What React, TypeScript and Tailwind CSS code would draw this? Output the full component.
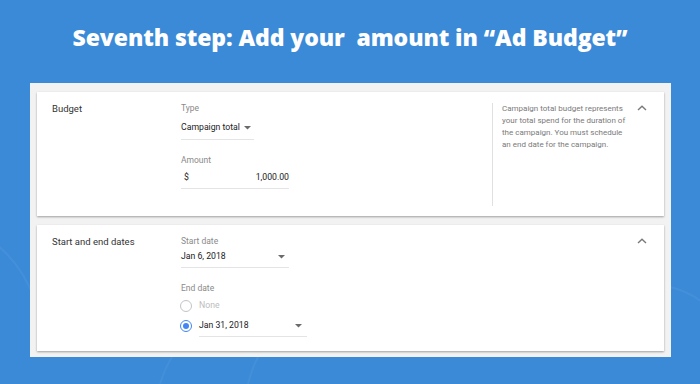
import React from "react";

const Caret = () => (
  <svg width="7" height="4" viewBox="0 0 7 4" className="shrink-0">
    <path d="M0 0 L7 0 L3.5 3.5 Z" fill="#6b6b6b" />
  </svg>
);

const ChevronUp = () => (
  <svg width="10" height="6" viewBox="0 0 10 6">
    <path d="M1 5 L5 1.2 L9 5" fill="none" stroke="#7a7a7a" strokeWidth="1.4" />
  </svg>
);

export default function App() {
  return (
    <div
      className="relative w-[700px] h-[384px] overflow-hidden bg-[#3b8ad8]"
      style={{ fontFamily: "Roboto, 'Liberation Sans', sans-serif" }}
    >
      <svg className="absolute inset-0" width="700" height="384" viewBox="0 0 700 384">
        <path d="M-10 240 Q 20 260 35 300" fill="none" stroke="rgba(255,255,255,0.05)" strokeWidth="2" />
        <path d="M660 285 Q 690 290 705 305" fill="none" stroke="rgba(255,255,255,0.05)" strokeWidth="2" />
        <path d="M160 384 Q 165 368 172 357" fill="none" stroke="rgba(255,255,255,0.045)" strokeWidth="2" />
        <path d="M248 384 Q 252 368 258 357" fill="none" stroke="rgba(255,255,255,0.045)" strokeWidth="2" />
      </svg>

      <div className="relative h-[83px] flex items-start justify-center pt-[21px]">
        <h1
          className="text-white font-extrabold text-[23px] leading-[32px] whitespace-pre tracking-[-0.1px]"
          style={{ fontFamily: "'Open Sans', 'Liberation Sans', sans-serif" }}
        >
          {"Seventh step: Add your  amount in \u201CAd Budget\u201D"}
        </h1>
      </div>

      <div className="relative ml-[30px] w-[641px] bg-[#f2f2f2] px-[7px] pt-[9px] pb-[6px] flex flex-col gap-[9px]">
        {/* Budget card */}
        <div className="h-[124px] bg-white shadow-[0_1px_2px_rgba(0,0,0,0.35)] flex pt-[9px] pl-[15px]">
          <div className="w-[129px] text-[9.5px] leading-[16px] text-[#333]">Budget</div>
          <div className="w-[311px] flex flex-col">
            <div className="h-[14px] leading-[14px] text-[8.5px] text-[#8a8a8a]">Type</div>
            <div className="mt-[2px] w-[73px] h-[23px] border-b border-[#e4e4e4] flex items-center gap-[4px] text-[8.7px] text-[#222]">
              <span>Campaign total</span>
              <Caret />
            </div>
            <div className="mt-[13px] h-[14px] leading-[14px] text-[8.5px] text-[#8a8a8a]">Amount</div>
            <div className="w-[108px] h-[22px] border-b border-[#e4e4e4] flex items-center justify-between pl-[3px] text-[8.7px] text-[#222]">
              <span>$</span>
              <span>1,000.00</span>
            </div>
          </div>
          <div className="mt-[2px] h-[103px] border-l border-[#e0e0e0]" />
          <div className="mt-[2px] ml-[9px] w-[126px] text-[8px] leading-[12px] text-[#7a7a7a]">
            Campaign total budget represents your total spend for the duration of the campaign. You must schedule an end date for the campaign.
          </div>
          <div className="ml-auto mr-[17px] mt-[4px]">
            <ChevronUp />
          </div>
        </div>

        {/* Dates card */}
        <div className="h-[126px] bg-white shadow-[0_1px_2px_rgba(0,0,0,0.35)] flex pt-[9px] pl-[15px]">
          <div className="w-[129px] text-[9.5px] leading-[16px] text-[#333]">Start and end dates</div>
          <div className="w-[311px] flex flex-col">
            <div className="mt-[1px] h-[12px] leading-[12px] text-[8.5px] text-[#8a8a8a]">Start date</div>
            <div className="w-[108px] h-[21px] border-b border-[#e4e4e4] flex items-center justify-between pr-[4px] text-[8.7px] text-[#222]">
              <span>Jan 6, 2018</span>
              <Caret />
            </div>
            <div className="mt-[13px] h-[14px] leading-[14px] text-[8.5px] text-[#8a8a8a]">End date</div>
            <div className="mt-[1px] h-[20px] flex items-center -ml-[1px]">
              <div className="w-[12px] h-[12px] rounded-full border-[1.5px] border-[#c4c4c4]" />
              <span className="ml-[7px] text-[8.7px] text-[#bdbdbd]">None</span>
            </div>
            <div className="h-[20px] flex items-center -ml-[1px]">
              <div className="w-[12px] h-[12px] rounded-full border-[1.5px] border-[#4285f4] flex items-center justify-center">
                <div className="w-[6px] h-[6px] rounded-full bg-[#4285f4]" />
              </div>
              <div className="ml-[7px] w-[108px] h-[21px] mt-[1px] border-b border-[#e4e4e4] flex items-center justify-between pr-[5px] text-[8.7px] text-[#222]">
                <span>Jan 31, 2018</span>
                <Caret />
              </div>
            </div>
          </div>
          <div className="ml-auto mr-[17px] mt-[4px]">
            <ChevronUp />
          </div>
        </div>
      </div>
    </div>
  );
}
